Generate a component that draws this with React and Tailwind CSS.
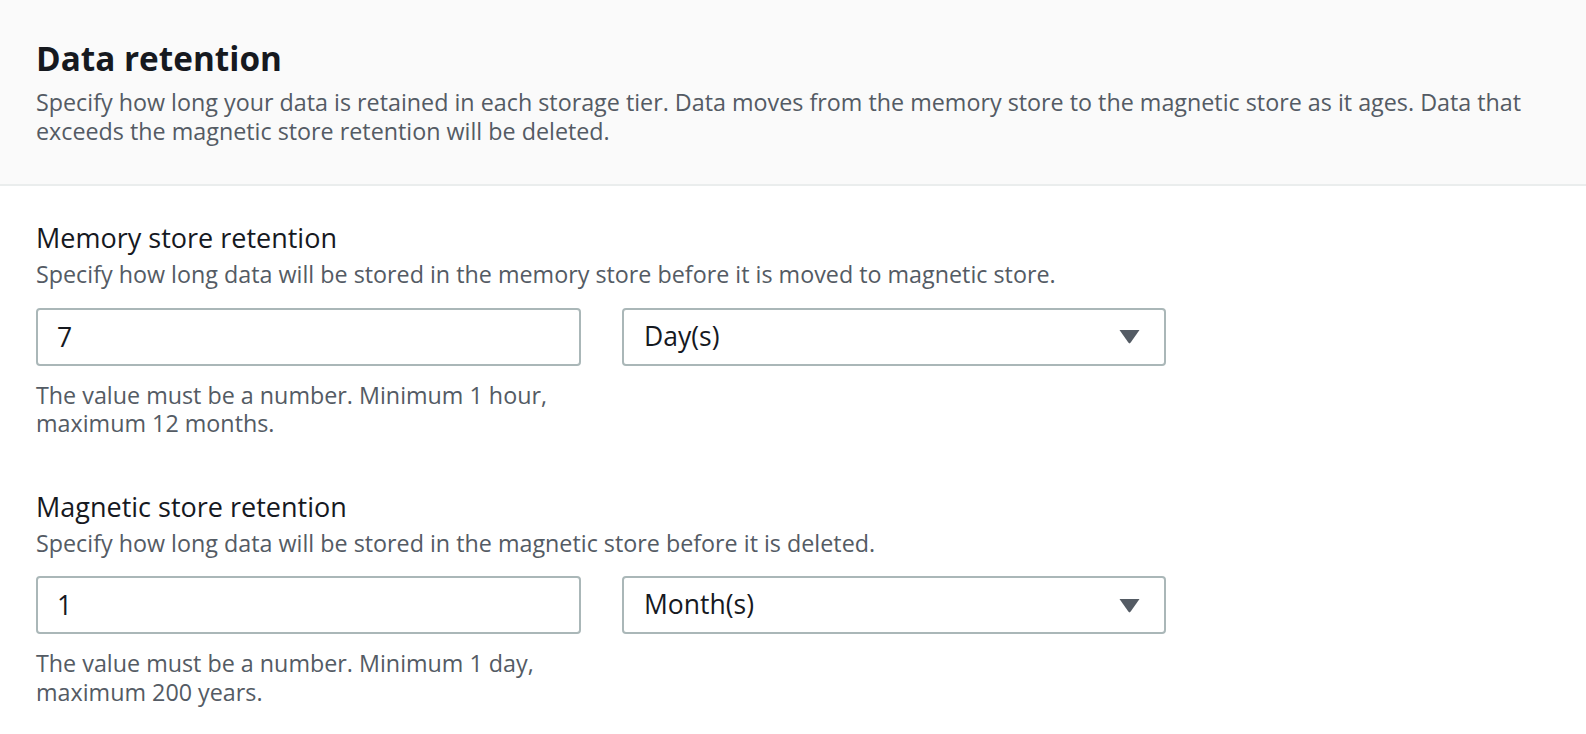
import { useState } from 'react'

const font = { fontFamily: '"Open Sans", "Noto Sans", Arial, sans-serif' }

function Caret() {
  return (
    <svg width="21" height="15" viewBox="0 0 21 15" className="shrink-0">
      <path d="M0.5 1 L20.5 1 L11.7 13.6 Q10.5 15.2 9.3 13.6 Z" fill="#545b64" />
    </svg>
  )
}

function RetentionField({ label, description, value, unit, hint }) {
  const [amount, setAmount] = useState(value)

  return (
    <div>
      <div className="text-[27px] leading-[32px] text-[#16191f]">{label}</div>
      <div className="mt-[6px] text-[23.3px] leading-[28.5px] text-[#545b64]">{description}</div>

      <div className="mt-[19px] flex gap-[41px]">
        <div className="w-[545px]">
          <input
            value={amount}
            onChange={(e) => setAmount(e.target.value)}
            className="h-[58px] w-full rounded-[4px] border-2 border-[#aab7b8] bg-white px-[19px] text-[26.5px] text-[#16191f] outline-none"
            style={font}
          />
          <div className="mt-[15px] text-[23.3px] leading-[28.5px] text-[#545b64]">{hint}</div>
        </div>

        <button
          className="flex h-[58px] w-[544px] items-center justify-between rounded-[4px] border-2 border-[#aab7b8] bg-white pl-[20px] pr-[24px] text-[26.5px] text-[#16191f]"
          style={font}
        >
          <span>{unit}</span>
          <Caret />
        </button>
      </div>
    </div>
  )
}

export default function App() {
  return (
    <div className="min-h-screen bg-white" style={font}>
      {/* Header */}
      <div className="border-b-2 border-[#eaeded] bg-[#fafafa] pl-[36px] pr-[35px] pt-[38px] pb-[39px]">
        <h2 className="text-[33.3px] font-bold leading-[40px] text-[#16191f]">Data retention</h2>
        <p className="mt-[10px] text-[23.3px] leading-[28.5px] text-[#545b64]">
          Specify how long your data is retained in each storage tier. Data moves from the memory store to the
          magnetic store as it ages. Data that exceeds the magnetic store retention will be deleted.
        </p>
      </div>

      {/* Fields */}
      <div className="flex flex-col gap-[53px] pl-[36px] pr-[35px] pt-[36px]">
        <RetentionField
          label="Memory store retention"
          description="Specify how long data will be stored in the memory store before it is moved to magnetic store."
          value="7"
          unit="Day(s)"
          hint="The value must be a number. Minimum 1 hour, maximum 12 months."
        />
        <RetentionField
          label="Magnetic store retention"
          description="Specify how long data will be stored in the magnetic store before it is deleted."
          value="1"
          unit="Month(s)"
          hint="The value must be a number. Minimum 1 day, maximum 200 years."
        />
      </div>
    </div>
  )
}
